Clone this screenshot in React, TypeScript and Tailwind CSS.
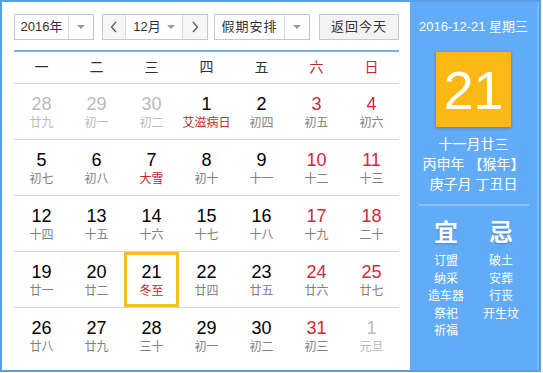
type Cell = {
  day: number;
  lunar: string;
  faded?: boolean;
  weekend?: boolean;
  festival?: boolean;
  today?: boolean;
};

const weekDays = ["一", "二", "三", "四", "五", "六", "日"];

const rows: Cell[][] = [
  [
    { day: 28, lunar: "廿九", faded: true },
    { day: 29, lunar: "初一", faded: true },
    { day: 30, lunar: "初二", faded: true },
    { day: 1, lunar: "艾滋病日", festival: true },
    { day: 2, lunar: "初四" },
    { day: 3, lunar: "初五", weekend: true },
    { day: 4, lunar: "初六", weekend: true },
  ],
  [
    { day: 5, lunar: "初七" },
    { day: 6, lunar: "初八" },
    { day: 7, lunar: "大雪", festival: true },
    { day: 8, lunar: "初十" },
    { day: 9, lunar: "十一" },
    { day: 10, lunar: "十二", weekend: true },
    { day: 11, lunar: "十三", weekend: true },
  ],
  [
    { day: 12, lunar: "十四" },
    { day: 13, lunar: "十五" },
    { day: 14, lunar: "十六" },
    { day: 15, lunar: "十七" },
    { day: 16, lunar: "十八" },
    { day: 17, lunar: "十九", weekend: true },
    { day: 18, lunar: "二十", weekend: true },
  ],
  [
    { day: 19, lunar: "廿一" },
    { day: 20, lunar: "廿二" },
    { day: 21, lunar: "冬至", festival: true, today: true },
    { day: 22, lunar: "廿四" },
    { day: 23, lunar: "廿五" },
    { day: 24, lunar: "廿六", weekend: true },
    { day: 25, lunar: "廿七", weekend: true },
  ],
  [
    { day: 26, lunar: "廿八" },
    { day: 27, lunar: "廿九" },
    { day: 28, lunar: "三十" },
    { day: 29, lunar: "初一" },
    { day: 30, lunar: "初二" },
    { day: 31, lunar: "初三", weekend: true },
    { day: 1, lunar: "元旦", faded: true },
  ],
];

const yi = ["订盟", "纳采", "造车器", "祭祀", "祈福"];
const ji = ["破土", "安葬", "行丧", "开生坟"];

function Caret() {
  return <span className="w-0 h-0 border-l-[4px] border-r-[4px] border-t-[4px] border-l-transparent border-r-transparent border-t-[#999]" />;
}

function Chevron({ dir }: { dir: "left" | "right" }) {
  return (
    <svg width="8" height="12" viewBox="0 0 8 12" fill="none" stroke="#555" strokeWidth="1.2">
      {dir === "left" ? <path d="M6 1 L1.5 6 L6 11" /> : <path d="M2 1 L6.5 6 L2 11" />}
    </svg>
  );
}

function DayCell({ cell }: { cell: Cell }) {
  const numColor = cell.faded ? "text-[#bbbbbb]" : cell.weekend ? "text-[#d0283a]" : "text-black";
  const lunarColor = cell.faded
    ? "text-[#bbbbbb]"
    : cell.festival
    ? "text-[#c1272d]"
    : "text-[#808080]";
  return (
    <div className="h-[55px] flex items-center justify-center">
      <div
        className={
          "w-[55px] h-[55px] flex flex-col items-center justify-center " +
          (cell.today ? "border-[3px] border-[#f6bf26]" : "")
        }
      >
        <span className={"text-[18px] leading-[22px] " + numColor}>{cell.day}</span>
        <span className={"text-[12px] leading-[16px] " + lunarColor}>{cell.lunar}</span>
      </div>
    </div>
  );
}

export default function App() {
  return (
    <div
      className="w-[541px] h-[372px] border-2 border-[#5a9fe6] flex bg-white"
      style={{ fontFamily: '"Liberation Sans", Arial, "Noto Sans CJK SC", sans-serif' }}
    >
      <div className="w-[408px] pl-3 pr-[11px] pt-3">
        <div className="flex items-center h-[26px] text-[13px] text-[#333]">
          <div className="flex h-[26px] border border-[#c8c8c8] bg-white">
            <span className="w-[54px] flex items-center justify-center border-r border-[#d8d8d8]">2016年</span>
            <span className="w-[24px] flex items-center justify-center">
              <Caret />
            </span>
          </div>
          <div className="flex h-[26px] border border-[#c8c8c8] ml-2">
            <span className="w-[23px] flex items-center justify-center border-r border-[#d8d8d8] bg-[#f6f6f6]">
              <Chevron dir="left" />
            </span>
            <span className="w-[57px] flex items-center justify-center gap-[6px] border-r border-[#d8d8d8]">
              12月 <Caret />
            </span>
            <span className="w-[24px] flex items-center justify-center bg-[#f6f6f6]">
              <Chevron dir="right" />
            </span>
          </div>
          <div className="flex h-[26px] border border-[#c8c8c8] ml-[6px]">
            <span className="w-[70px] flex items-center justify-center border-r border-[#d8d8d8] tracking-[1px]">假期安排</span>
            <span className="w-[24px] flex items-center justify-center">
              <Caret />
            </span>
          </div>
          <div className="ml-[9px] w-[82px] h-[26px] border border-[#c8c8c8] bg-[#f4f4f4] flex items-center justify-center tracking-[1px]">
            返回今天
          </div>
        </div>

        <div className="mt-[10px] border-t-2 border-[#78b0ea] grid grid-cols-7 h-[34px] items-center border-b border-b-[#d4d4d4] text-[14px]">
          {weekDays.map((w, i) => (
            <span key={w} className={"text-center " + (i >= 5 ? "text-[#c1272d]" : "text-[#333]")}>
              {w}
            </span>
          ))}
        </div>

        {rows.map((row, r) => (
          <div
            key={r}
            className={"grid grid-cols-7 " + (r < rows.length - 1 ? "border-b border-[#d4d4d4]" : "")}
          >
            {row.map((cell, c) => (
              <DayCell key={c} cell={cell} />
            ))}
          </div>
        ))}
      </div>

      <div className="flex-1 bg-[#62abf6] flex flex-col items-center text-white border-r-2 border-[#7ab9f8]">
        <div className="mt-[16px] text-[13px] leading-[18px]">2016-12-21 星期三</div>
        <div className="mt-[16px] w-[75px] h-[75px] bg-[#fdb813] flex items-center justify-center text-[54px] leading-none shadow-[0_1px_3px_rgba(0,0,0,0.25)]">
          21
        </div>
        <div className="mt-[7px] text-[14px] leading-[20px] text-center">
          <div>十一月廿三</div>
          <div>丙申年 【猴年】</div>
          <div>庚子月 丁丑日</div>
        </div>
        <div className="mt-[10px] w-[110px] h-[2px] bg-[#8cc2f8]" />
        <div className="mt-[12px] flex w-[110px] justify-between">
          <div className="w-[55px] flex flex-col items-center">
            <span className="text-[24px] leading-[30px] font-bold [text-shadow:0_1px_2px_rgba(0,0,0,0.2)]">宜</span>
            <div className="mt-[5px] flex flex-col items-center text-[12px] leading-[17.5px]">
              {yi.map((t) => (
                <span key={t}>{t}</span>
              ))}
            </div>
          </div>
          <div className="w-[55px] flex flex-col items-center">
            <span className="text-[24px] leading-[30px] font-bold [text-shadow:0_1px_2px_rgba(0,0,0,0.2)]">忌</span>
            <div className="mt-[5px] flex flex-col items-center text-[12px] leading-[17.5px]">
              {ji.map((t) => (
                <span key={t}>{t}</span>
              ))}
            </div>
          </div>
        </div>
      </div>
    </div>
  );
}
